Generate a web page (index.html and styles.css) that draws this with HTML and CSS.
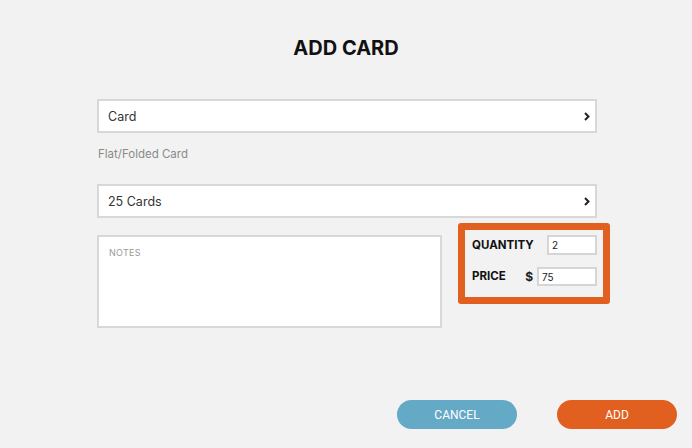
FILE: index.html
```html
<!DOCTYPE html>
<html lang="en">
<head>
    <meta charset="UTF-8">
    <title>Add Card</title>
    <link rel="stylesheet" href="styles.css">
</head>
<body>
    <div class="page">
        <h1>ADD CARD</h1>

        <div class="form">
            <div class="select-box">
                <span>Card</span>
                <svg class="chevron" width="6" height="9" viewBox="0 0 6 9"><polyline points="1,1 4.5,4.5 1,8" fill="none" stroke="#222" stroke-width="2"/></svg>
            </div>
            <div class="hint">Flat/Folded Card</div>

            <div class="select-box second">
                <span>25 Cards</span>
                <svg class="chevron" width="6" height="9" viewBox="0 0 6 9"><polyline points="1,1 4.5,4.5 1,8" fill="none" stroke="#222" stroke-width="2"/></svg>
            </div>

            <div class="details">
                <div class="notes">NOTES</div>
                <div class="order-box">
                    <div class="order-row">
                        <label>QUANTITY</label>
                        <div class="field qty">2</div>
                    </div>
                    <div class="order-row">
                        <label>PRICE</label>
                        <div class="price-group">
                            <span class="dollar">$</span>
                            <div class="field price">75</div>
                        </div>
                    </div>
                </div>
            </div>
        </div>

        <div class="actions">
            <button class="btn cancel">CANCEL</button>
            <button class="btn add">ADD</button>
        </div>
    </div>
</body>
</html>
```
FILE: styles.css
```css
body {
    margin: 0;
    background-color: #f2f2f2;
    font-family: Inter, "Noto Sans", sans-serif;
    color: #222;
}
.page {
    width: 692px;
    height: 448px;
    padding-top: 36px;
    box-sizing: border-box;
}
h1 {
    margin: 0;
    text-align: center;
    font-size: 20px;
    line-height: 24px;
    font-weight: 700;
    color: #111;
}
.form {
    width: 500px;
    margin: 39px 0 0 97px;
}
.select-box {
    height: 34px;
    box-sizing: border-box;
    border: 2px solid #d8d8d8;
    background: #fff;
    display: flex;
    align-items: center;
    justify-content: space-between;
    padding: 0 5px 0 9px;
    font-size: 12.5px;
    color: #333;
}
.select-box.second {
    margin-top: 22px;
}
.hint {
    margin-top: 13px;
    font-size: 11.5px;
    line-height: 16px;
    color: #8a8a8a;
    padding-left: 1px;
}
.details {
    display: flex;
    align-items: flex-start;
    margin-top: 5px;
}
.notes {
    flex: 0 0 345px;
    height: 93px;
    margin-top: 12px;
    box-sizing: border-box;
    border: 2px solid #d8d8d8;
    background: #fff;
    padding: 10px 10px;
    font-size: 9px;
    color: #999;
    letter-spacing: 0.3px;
}
.order-box {
    flex: 0 0 152px;
    height: 81px;
    margin-left: 16px;
    box-sizing: border-box;
    border: 7px solid #e2601f;
    border-radius: 3px;
    background: #f2f2f2;
    padding: 5px 6px 0 7px;
}
.order-row {
    display: flex;
    align-items: center;
    justify-content: space-between;
    height: 20px;
}
.order-row + .order-row {
    margin-top: 11px;
}
.order-row label {
    font-size: 11.5px;
    font-weight: 700;
    color: #111;
}
.price-group {
    display: flex;
    align-items: center;
}
.dollar {
    font-size: 12px;
    font-weight: 700;
    margin-right: 4px;
}
.field {
    height: 20px;
    box-sizing: border-box;
    border: 2px solid #d5d5d5;
    background: #fff;
    font-size: 10px;
    line-height: 16px;
    padding-left: 3px;
    color: #222;
}
.qty {
    width: 50px;
}
.price {
    width: 60px;
    height: 19px;
}
.actions {
    display: flex;
    justify-content: flex-end;
    gap: 40px;
    padding-right: 15px;
    margin-top: 72px;
}
.btn {
    width: 120px;
    height: 29px;
    border: none;
    border-radius: 15px;
    color: #fff;
    font-family: Roboto, sans-serif;
    font-size: 12px;
    cursor: pointer;
}
.cancel {
    background-color: #64a9c5;
}
.add {
    background-color: #e2601f;
}
```
